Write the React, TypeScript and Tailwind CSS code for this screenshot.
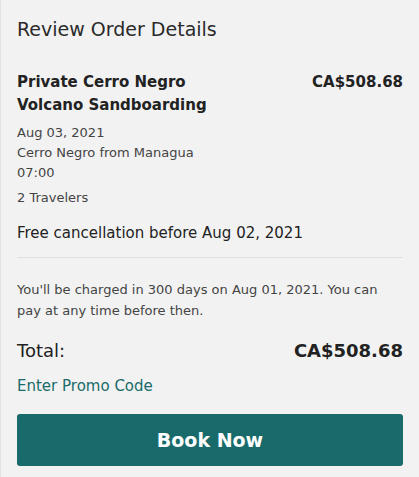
export default function App() {
  return (
    <div className="min-h-[477px] w-[419px] border-l border-[#e2e2e2] bg-[#f2f2f2] px-4 pt-[14px] font-['DejaVu_Sans',sans-serif] text-[#222]">
      <h1 className="text-[19px] leading-[30px] text-[#2a2a2a]">Review Order Details</h1>

      <div className="mt-[27px] flex items-start justify-between">
        <div className="text-[15px] font-bold leading-[23px]">
          Private Cerro Negro
          <br />
          Volcano Sandboarding
        </div>
        <div className="text-[15px] font-bold leading-[23px]">CA$508.68</div>
      </div>

      <div className="mt-[6px] text-[13px] leading-[20px] text-[#444]">
        <div>Aug 03, 2021</div>
        <div>Cerro Negro from Managua</div>
        <div>07:00</div>
        <div className="mt-[5px]">2 Travelers</div>
      </div>

      <p className="mt-[14px] text-[15px] leading-[22px]">Free cancellation before Aug 02, 2021</p>

      <hr className="mt-[13px] border-[#e0e0e0]" />

      <p className="mt-[21px] text-[13px] leading-[21px] text-[#444]">
        You'll be charged in 300 days on Aug 01, 2021. You can pay at any time before then.
      </p>

      <div className="mt-[17px] flex items-center justify-between">
        <span className="text-[18px] leading-[26px]">Total:</span>
        <span className="text-[18px] font-bold leading-[26px]">CA$508.68</span>
      </div>

      <button className="mt-[11px] block text-[15px] leading-[22px] text-[#1a6b6b]">Enter Promo Code</button>

      <button className="mt-[17px] flex h-[52px] w-full items-center justify-center rounded-[3px] bg-[#196b6b] text-[19px] font-bold text-white">
        Book Now
      </button>
    </div>
  );
}
